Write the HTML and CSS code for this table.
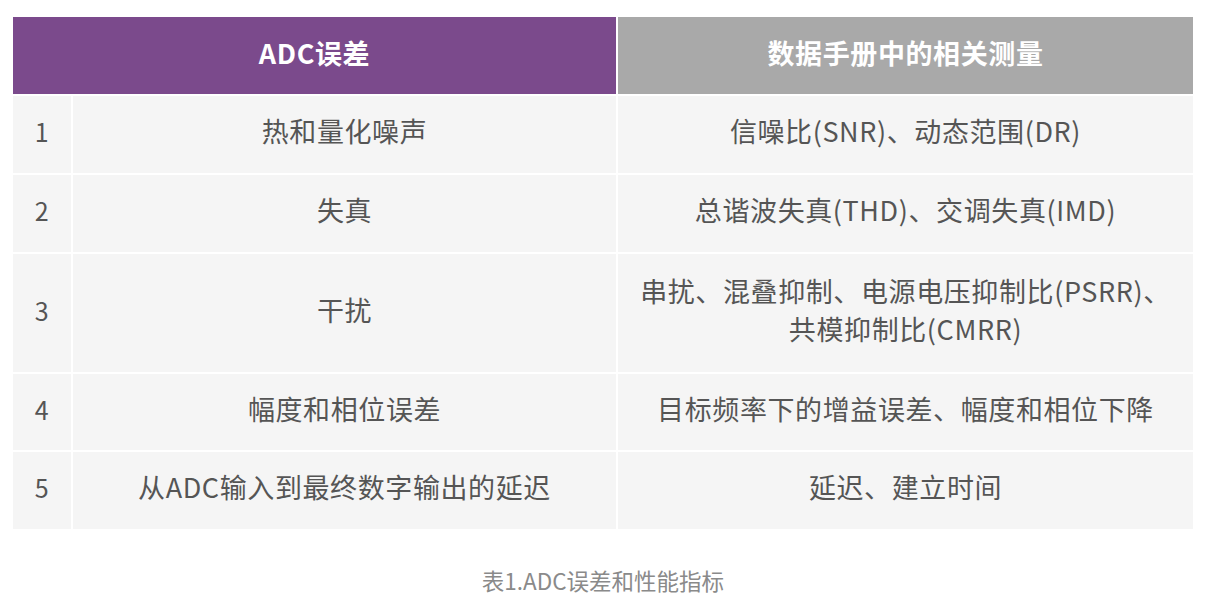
FILE: index.html
```html
<!DOCTYPE html>
<html lang="zh-CN">
<head>
<meta charset="utf-8">
<title>ADC误差和性能指标</title>
<link rel="stylesheet" href="styles.css">
</head>
<body>
<div class="page">
  <div class="grid">
    <div class="cell head purple span2">ADC误差</div>
    <div class="cell head gray">数据手册中的相关测量</div>

    <div class="cell num r">1</div>
    <div class="cell r">热和量化噪声</div>
    <div class="cell r">信噪比(SNR)、动态范围(DR)</div>

    <div class="cell num r">2</div>
    <div class="cell r">失真</div>
    <div class="cell r">总谐波失真(THD)、交调失真(IMD)</div>

    <div class="cell num r">3</div>
    <div class="cell r">干扰</div>
    <div class="cell r">串扰、混叠抑制、电源电压抑制比(PSRR)、<br>共模抑制比(CMRR)</div>

    <div class="cell num r">4</div>
    <div class="cell r">幅度和相位误差</div>
    <div class="cell r">目标频率下的增益误差、幅度和相位下降</div>

    <div class="cell num r">5</div>
    <div class="cell r">从ADC输入到最终数字输出的延迟</div>
    <div class="cell r">延迟、建立时间</div>
  </div>
  <div class="caption">表1.ADC误差和性能指标</div>
</div>
</body>
</html>
```

FILE: styles.css
```css
html, body {
  margin: 0;
  padding: 0;
  background: #ffffff;
}

.page {
  padding: 17px 14px 0 13px;
  font-family: "Noto Sans CJK SC", "Noto Sans", "Liberation Sans", sans-serif;
}

.grid {
  display: grid;
  grid-template-columns: 58px 543px 575px;
  grid-template-rows: 77px 77px 77px 118px 76px 77px;
  gap: 2px;
  width: 1180px;
}

.cell {
  display: flex;
  align-items: center;
  justify-content: center;
  text-align: center;
  background: #f5f5f5;
  color: #555555;
  font-size: 27px;
  line-height: 38px;
  letter-spacing: 0.6px;
  padding-bottom: 7px;
  box-sizing: border-box;
}

.head {
  color: #ffffff;
  font-weight: 700;
  font-size: 27px;
  padding-bottom: 6px;
}

.purple {
  background: #7b4a8c;
}

.gray {
  background: #a9a9a9;
}

.span2 {
  grid-column: span 2;
}

.num {
  font-size: 25px;
}

.caption {
  margin-top: 36px;
  text-align: center;
  width: 1180px;
  color: #8a8a8a;
  font-size: 22.5px;
  line-height: 30px;
}
```
